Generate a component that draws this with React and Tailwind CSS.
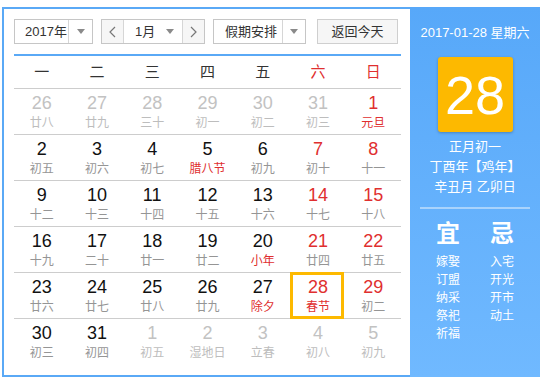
import React from "react";

const RED = "text-[#e02f2f]";

const rows = [
  [
    { d: 26, l: "廿八", o: true },
    { d: 27, l: "廿九", o: true },
    { d: 28, l: "三十", o: true },
    { d: 29, l: "初一", o: true },
    { d: 30, l: "初二", o: true },
    { d: 31, l: "初三", o: true },
    { d: 1, l: "元旦", rn: true, rl: true },
  ],
  [
    { d: 2, l: "初五" },
    { d: 3, l: "初六" },
    { d: 4, l: "初七" },
    { d: 5, l: "腊八节", rl: true },
    { d: 6, l: "初九" },
    { d: 7, l: "初十", rn: true },
    { d: 8, l: "十一", rn: true },
  ],
  [
    { d: 9, l: "十二" },
    { d: 10, l: "十三" },
    { d: 11, l: "十四" },
    { d: 12, l: "十五" },
    { d: 13, l: "十六" },
    { d: 14, l: "十七", rn: true },
    { d: 15, l: "十八", rn: true },
  ],
  [
    { d: 16, l: "十九" },
    { d: 17, l: "二十" },
    { d: 18, l: "廿一" },
    { d: 19, l: "廿二" },
    { d: 20, l: "小年", rl: true },
    { d: 21, l: "廿四", rn: true },
    { d: 22, l: "廿五", rn: true },
  ],
  [
    { d: 23, l: "廿六" },
    { d: 24, l: "廿七" },
    { d: 25, l: "廿八" },
    { d: 26, l: "廿九" },
    { d: 27, l: "除夕", rl: true },
    { d: 28, l: "春节", rn: true, rl: true, sel: true },
    { d: 29, l: "初二", rn: true },
  ],
  [
    { d: 30, l: "初三" },
    { d: 31, l: "初四" },
    { d: 1, l: "初五", o: true },
    { d: 2, l: "湿地日", o: true },
    { d: 3, l: "立春", o: true },
    { d: 4, l: "初八", o: true },
    { d: 5, l: "初九", o: true },
  ],
];

const Caret = () => (
  <svg width="8" height="5" viewBox="0 0 8 5">
    <polygon points="0,0 8,0 4,5" fill="#8a8a8a" />
  </svg>
);

const Chevron = ({ dir }) => (
  <svg width="7" height="12" viewBox="0 0 7 12">
    <polyline
      points={dir === "left" ? "6,1 1,6 6,11" : "1,1 6,6 1,11"}
      fill="none"
      stroke="#777"
      strokeWidth="1.2"
    />
  </svg>
);

const Cell = ({ c }) => {
  const num = c.o ? "text-[#c2c2c2]" : c.rn ? RED : "text-[#111]";
  const lun = c.o ? "text-[#bdbdbd]" : c.rl ? RED : "text-[#959595]";
  return (
    <div className="relative flex flex-col items-center pt-[4px]">
      {c.sel && (
        <div className="absolute left-0 top-[-1px] w-[54px] h-[47px] border-[3px] border-[#fdb900]" />
      )}
      <span className={`font-['Liberation_Sans',sans-serif] text-[18px] leading-[20px] ${num}`}>
        {c.d}
      </span>
      <span className={`mt-[2px] text-[12px] leading-[16px] ${lun}`}>{c.l}</span>
    </div>
  );
};

export default function App() {
  return (
    <div className="w-[548px] h-[383px] bg-white pt-[7px] pl-[2px] font-['Liberation_Sans','Noto_Sans_CJK_SC',sans-serif]">
      <div className="flex w-[538px] h-[370px]">
        {/* Left calendar */}
        <div className="w-[408px] h-full border-l-2 border-y-2 border-[#5aa9f6] pl-[10px] pr-[9px] pt-[10px]">
          {/* Controls */}
          <div className="flex items-center h-[25px] text-[13px] text-[#333]">
            <div className="flex w-[79px] h-[25px] border border-[#c6c6c6]">
              <div className="flex-1 flex items-center pl-[10px]">2017年</div>
              <div className="w-[24px] flex items-center justify-center border-l border-[#d6d6d6]">
                <Caret />
              </div>
            </div>
            <div className="flex ml-[8px] w-[104px] h-[25px] border border-[#c6c6c6]">
              <div className="w-[22px] flex items-center justify-center bg-[#f6f6f6] border-r border-[#d6d6d6]">
                <Chevron dir="left" />
              </div>
              <div className="flex-1 flex items-center justify-between pl-[11px] pr-[8px]">
                <span>1月</span>
                <Caret />
              </div>
              <div className="w-[22px] flex items-center justify-center bg-[#f6f6f6] border-l border-[#d6d6d6]">
                <Chevron dir="right" />
              </div>
            </div>
            <div className="flex ml-[8px] w-[93px] h-[25px] border border-[#c6c6c6]">
              <div className="flex-1 flex items-center pl-[11px]">假期安排</div>
              <div className="w-[23px] flex items-center justify-center border-l border-[#d6d6d6]">
                <Caret />
              </div>
            </div>
            <div className="flex items-center justify-center ml-[11px] w-[81px] h-[25px] border border-[#cfcfcf] bg-[#f6f6f6]">
              返回今天
            </div>
          </div>

          {/* Week header */}
          <div className="mt-[10px] h-[2px] bg-[#5aa9f6]" />
          <div className="grid grid-cols-7 h-[33px] border-b border-[#cdcdcd] text-[15px]">
            {["一", "二", "三", "四", "五", "六", "日"].map((w, i) => (
              <div
                key={w}
                className={`flex items-center justify-center ${i >= 5 ? RED : "text-[#333]"}`}
              >
                {w}
              </div>
            ))}
          </div>

          {/* Days */}
          {rows.map((r, i) => (
            <div
              key={i}
              className={`grid grid-cols-7 h-[46px] ${i < 5 ? "border-b border-[#cdcdcd]" : ""}`}
            >
              {r.map((c, j) => (
                <Cell key={j} c={c} />
              ))}
            </div>
          ))}
        </div>

        {/* Right panel */}
        <div className="w-[130px] h-full bg-gradient-to-b from-[#57a8f9] to-[#70b9ff] text-white flex flex-col items-center">
          <div className="mt-[18px] text-[13px] leading-[16px]">2017-01-28 星期六</div>
          <div className="mt-[16px] w-[75px] h-[75px] rounded-[3px] bg-[#fdb900] shadow-[0_1px_3px_rgba(0,0,0,0.25)] flex items-center justify-center">
            <span className="font-['Liberation_Sans',sans-serif] text-[54px] leading-none">28</span>
          </div>
          <div className="mt-[5px] text-[13px] leading-[20px] text-center">
            <div>正月初一</div>
            <div>丁酉年【鸡年】</div>
            <div>辛丑月 乙卯日</div>
          </div>
          <div className="mt-[10px] w-[110px] h-[2px] bg-[#a9d3fc]" />
          <div className="mt-[11px] self-stretch pl-[26px] flex">
            <div className="w-[54px] flex flex-col">
              <span className="text-[24px] leading-[28px] font-bold">宜</span>
              <div className="mt-[5px] text-[12px] leading-[18px]">
                <div>嫁娶</div>
                <div>订盟</div>
                <div>纳采</div>
                <div>祭祀</div>
                <div>祈福</div>
              </div>
            </div>
            <div className="flex flex-col">
              <span className="text-[24px] leading-[28px] font-bold">忌</span>
              <div className="mt-[5px] text-[12px] leading-[18px]">
                <div>入宅</div>
                <div>开光</div>
                <div>开市</div>
                <div>动土</div>
              </div>
            </div>
          </div>
        </div>
      </div>
    </div>
  );
}
